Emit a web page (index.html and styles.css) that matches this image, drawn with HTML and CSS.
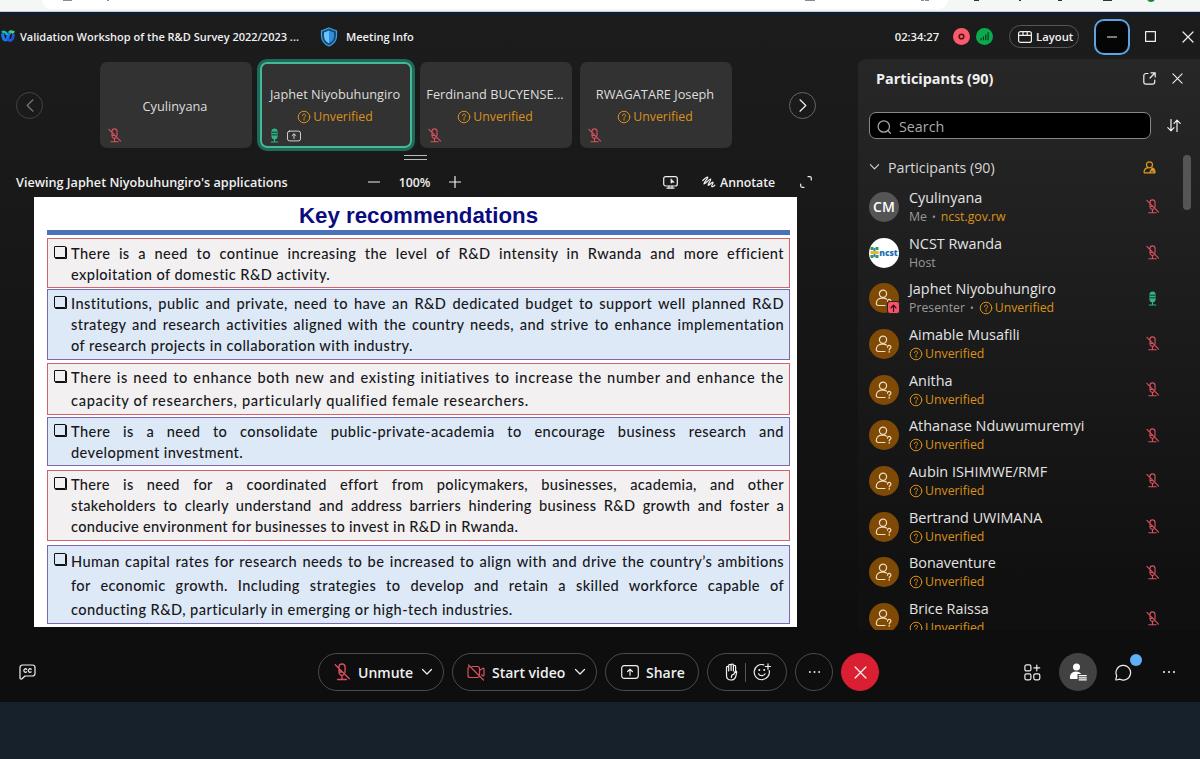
FILE: index.html
```html
<!DOCTYPE html>
<html lang="en">
<head>
    <meta charset="UTF-8">
    <meta name="viewport" content="width=device-width, initial-scale=1.0">
    <title>Validation Workshop of the R&amp;D Survey 2022/2023</title>
    <link rel="stylesheet" href="styles.css">
</head>
<body>
    <!-- Icon sprite -->
    <svg class="sprite" xmlns="http://www.w3.org/2000/svg">
        <symbol id="mic-off" viewBox="0 0 16 16">
            <path d="M5.300 4V3.600a2.700 2.700 0 0 1 5.400 0V8.500M5.300 6v2.300a2.700 2.700 0 0 0 4 2.300M5.300 8h3M8 11v3.500M4 14.700h8M2 1.500l12.500 12.500"/>
        </symbol>
        <symbol id="mic-on" viewBox="0 0 16 16">
            <rect x="5.300" y="1" width="5.400" height="10.500" rx="2.700" fill="currentColor"/>
            <path d="M8 11v3.500M4.500 14.900h7"/>
            <path class="gap" d="M5.500 4.500h5M5.500 7.300h5"/>
        </symbol>
        <symbol id="question" viewBox="0 0 14 14">
            <circle cx="7" cy="7" r="5.800"/>
            <path d="M5.400 5.600a1.600 1.600 0 1 1 2.400 1.400c-.6.300-.8.600-.8 1.100M7 9.300v.9"/>
        </symbol>
        <symbol id="share" viewBox="0 0 18 14">
            <rect x=".7" y=".7" width="16.600" height="12.600" rx="2.500"/>
            <path d="M9 10.200V4.500M6.600 6.500L9 4.200l2.400 2.300"/>
        </symbol>
        <symbol id="person" viewBox="0 0 18 18">
            <circle cx="8" cy="4.800" r="3.600"/>
            <path d="M10 16.500H3.300c-1.300 0-2-.8-2-2 0-2.900 2.300-5.200 5.200-5.400h2c1.100 0 2.100.4 2.900 1"/>
            <path d="M12.500 12.200a1.700 1.700 0 1 1 2.500 1.400c-.6.300-.8.600-.8 1.200M14.200 16.300v.9"/>
        </symbol>
        <symbol id="close" viewBox="0 0 12 12"><path d="M1 1l10 10M11 1L1 11"/></symbol>
        <symbol id="down" viewBox="0 0 12 8"><path d="M1.500 1.500L6 6l4.500-4.500"/></symbol>
        <symbol id="dots" viewBox="0 0 14 4">
            <g fill="currentColor" stroke="none"><circle cx="2" cy="2" r="1"/><circle cx="7" cy="2" r="1"/><circle cx="12" cy="2" r="1"/></g>
        </symbol>
    </svg>

    <!-- Browser strip behind the window -->
    <div class="browser">
        <div class="address"></div>
        <svg class="browser-marks" viewBox="0 0 1200 12">
            <path d="M63 0h9M108 0v1M805 0h10M921 0h3M925 0h4" stroke="#8b8b95"/>
            <path d="M974 0h5M1020 0v1M1058 0h4M1103 0h9" stroke="#333"/>
            <circle cx="1151" cy="-2" r="4" fill="#178a2c"/>
        </svg>
    </div>

    <div class="window">
        <!-- Title bar -->
        <header class="titlebar">
            <svg class="logo" viewBox="0 0 16 13">
                <path d="M2.600 3.500c.2 3.600 1.200 6.500 3 6.500 1.500 0 2-2 2.600-4.200C8.900 3.500 9.500 2 11 2" fill="none" stroke="#1779ef" stroke-width="3.200"/>
                <path d="M2 2.500c1.800-1.400 4.300-.3 5 2.500" fill="none" stroke="#15b7c5" stroke-width="2.600"/>
                <path d="M8 8.500c.5 1.500 1.300 2 2.200 2 2 0 3.100-3.600 3.200-6.500" fill="none" stroke="#2453df" stroke-width="3"/>
                <path d="M9.500 2.600c1-1.100 3-1.200 4.500.3" fill="none" stroke="#43d071" stroke-width="3"/>
            </svg>
            <span class="meeting-title">Validation Workshop of the R&amp;D Survey 2022/2023 ...</span>
            <svg class="shield" viewBox="0 0 18 20">
                <path d="M9 1l7.500 3v5c0 4.800-3 8-7.500 10C4.500 17 1.500 13.800 1.500 9V4z" fill="#17496f" stroke="#3f9fe0" stroke-width="1.200"/>
                <path d="M9 3.500l5 2V9c0 3.500-1.900 5.800-5 7.400z" fill="#2d8fe0"/>
                <path d="M9 3.500l-5 2V9c0 3.500 1.900 5.800 5 7.400z" fill="#6cc1ff"/>
            </svg>
            <span class="meeting-info">Meeting Info</span>
            <span class="clock">02:34:27</span>
            <svg class="status" viewBox="0 0 16 16"><circle cx="8" cy="8" r="8" fill="#fb5a6c"/><circle cx="8" cy="8" r="2.200" fill="none" stroke="#4e1119" stroke-width="1.400"/></svg>
            <svg class="status" viewBox="0 0 16 16"><circle cx="8" cy="8" r="8" fill="#0bab4d"/><path d="M4.800 11.500v-2M7 11.500V8M9.200 11.500V6M11.400 11.500V4" stroke="#07351a" stroke-width="1.100"/></svg>
            <button class="layout-button">
                <svg class="icon" width="14" height="12" viewBox="0 0 14 12"><rect x=".6" y=".6" width="12.800" height="10.800" rx="2"/><path d="M.6 4.300h12.800M5 .6v3.700M9.200 .6v3.700"/></svg>
                Layout
            </button>
            <button class="minimize"><svg class="icon" width="10" height="2" viewBox="0 0 10 2"><path d="M0 1h10"/></svg></button>
            <svg class="icon maximize" width="11" height="11" viewBox="0 0 11 11"><rect x=".6" y=".6" width="9.800" height="9.800"/></svg>
            <svg class="icon win-close" width="12" height="12"><use href="#close"/></svg>
        </header>

        <div class="main">
            <section class="stage">
                <!-- Video strip -->
                <div class="strip">
                    <button class="nav nav-prev"><svg class="icon" width="8" height="13" viewBox="0 0 8 13"><path d="M7 .8L1.200 6.500 7 12.200"/></svg></button>
                    <div class="tiles">
                        <div class="tile">
                            <span class="tile-name">Cyulinyana</span>
                            <div class="tile-icons"><svg class="icon red"><use href="#mic-off"/></svg></div>
                        </div>
                        <div class="tile active">
                            <span class="tile-name">Japhet Niyobuhungiro</span>
                            <span class="unverified"><svg class="icon"><use href="#question"/></svg>Unverified</span>
                            <div class="tile-icons"><svg class="icon green"><use href="#mic-on"/></svg><svg class="icon sharing"><use href="#share"/></svg></div>
                        </div>
                        <div class="tile">
                            <span class="tile-name">Ferdinand BUCYENSE...</span>
                            <span class="unverified"><svg class="icon"><use href="#question"/></svg>Unverified</span>
                            <div class="tile-icons"><svg class="icon red"><use href="#mic-off"/></svg></div>
                        </div>
                        <div class="tile">
                            <span class="tile-name">RWAGATARE Joseph</span>
                            <span class="unverified"><svg class="icon"><use href="#question"/></svg>Unverified</span>
                            <div class="tile-icons"><svg class="icon red"><use href="#mic-off"/></svg></div>
                        </div>
                    </div>
                    <button class="nav nav-next"><svg class="icon" width="8" height="13" viewBox="0 0 8 13"><path d="M1 .8l5.800 5.700L1 12.200"/></svg></button>
                </div>
                <div class="handle"></div>

                <!-- Viewer toolbar -->
                <div class="viewbar">
                    <span class="viewing">Viewing Japhet Niyobuhungiro's applications</span>
                    <svg class="icon" width="12" height="12" viewBox="0 0 12 12"><path d="M.5 6h11"/></svg>
                    <span class="zoom">100%</span>
                    <svg class="icon" width="12" height="12" viewBox="0 0 12 12"><path d="M.5 6h11M6 .5v11"/></svg>
                    <svg class="icon monitor" width="15" height="13" viewBox="0 0 15 13"><rect x=".7" y=".7" width="13.600" height="9.300" rx="2"/><path d="M4 12.200h7M6 10v2M9 10v2"/><path d="M8 3.200v4l1.200-1h1.600z" fill="currentColor" stroke-width=".8"/></svg>
                    <span class="annotate">
                        <svg class="icon" width="14" height="12" viewBox="0 0 14 12"><path d="M.8 4.500C3 2.300 5 .8 5.700 1.200c.8.500-4.500 6-3.800 6.700.7.700 5.800-5.500 6.800-4.800.8.600-3.400 5.600-2.500 6.200.8.500 4-3.700 4.800-3.100.8.500-1.900 3.500-1.200 4.300.5.600 2-.4 3-1.300"/></svg>
                        Annotate
                    </span>
                    <svg class="icon expand" width="12" height="12" viewBox="0 0 12 12"><path d="M8 .7h1.800c.9 0 1.500.6 1.500 1.500V4M4 11.300H2.200c-.9 0-1.500-.6-1.500-1.500V8"/></svg>
                </div>

                <!-- Shared slide -->
                <article class="slide">
                    <h1>Key recommendations</h1>
                    <div class="rule"></div>
                    <div class="rec rec-1 pink">
                        <i class="box"></i>
                        <p><span>There is a need to continue increasing the level of R&amp;D intensity in Rwanda and more efficient</span>
                        <span>exploitation of domestic R&amp;D activity.</span></p>
                    </div>
                    <div class="rec rec-2 blue">
                        <i class="box"></i>
                        <p><span>Institutions, public and private, need to have an R&amp;D dedicated budget to support well planned R&amp;D</span>
                        <span>strategy and research activities aligned with the country needs, and strive to enhance implementation</span>
                        <span>of research projects in collaboration with industry.</span></p>
                    </div>
                    <div class="rec rec-3 pink">
                        <i class="box"></i>
                        <p><span>There is need to enhance both new and existing initiatives to increase the number and enhance the</span>
                        <span>capacity of researchers, particularly qualified female researchers.</span></p>
                    </div>
                    <div class="rec rec-4 blue">
                        <i class="box"></i>
                        <p><span>There is a need to consolidate public-private-academia to encourage business research and</span>
                        <span>development investment.</span></p>
                    </div>
                    <div class="rec rec-5 pink">
                        <i class="box"></i>
                        <p><span>There is need for a coordinated effort from policymakers, businesses, academia, and other</span>
                        <span>stakeholders to clearly understand and address barriers hindering business R&amp;D growth and foster a</span>
                        <span>conducive environment for businesses to invest in R&amp;D in Rwanda.</span></p>
                    </div>
                    <div class="rec rec-6 blue">
                        <i class="box"></i>
                        <p><span>Human capital rates for research needs to be increased to align with and drive the country’s ambitions</span>
                        <span>for economic growth. Including strategies to develop and retain a skilled workforce capable of</span>
                        <span>conducting R&amp;D, particularly in emerging or high-tech industries.</span></p>
                    </div>
                </article>
            </section>

            <!-- Participants panel -->
            <aside class="panel">
                <div class="panel-head">
                    <h2>Participants (90)</h2>
                    <svg class="icon" width="13" height="13" viewBox="0 0 13 13"><path d="M5 1.500H3A2.200 2.200 0 0 0 .8 3.700V10A2.200 2.200 0 0 0 3 12.200h6.500a2.200 2.200 0 0 0 2.200-2.200V8M8 .8h4.200V5M12 1L7 6"/></svg>
                    <svg class="icon" width="11" height="11"><use href="#close"/></svg>
                </div>
                <div class="search-row">
                    <div class="search">
                        <svg class="icon" width="14" height="14" viewBox="0 0 14 14"><circle cx="6.800" cy="6.500" r="5.700"/><path d="M10.800 10.500l2.700 2.900"/></svg>
                        Search
                    </div>
                    <svg class="icon" width="14" height="13" viewBox="0 0 14 13"><path d="M4 .5v11.300M.8 8.600L4 11.800l3-3.200M10 12.500V1.200M7 4.400l3-3.200 3.200 3.200"/></svg>
                </div>
                <div class="group">
                    <svg class="icon" width="11" height="8"><use href="#down"/></svg>
                    <span>Participants (90)</span>
                    <svg class="icon amber" width="13" height="13" viewBox="0 0 13 13"><circle cx="6.500" cy="3.800" r="3"/><path d="M6 11.800H1.200c-.3-2.500 1-4.500 3.300-5M8.700 6.800c2.300.5 3.500 2.500 3.200 5H6.500L9 7.500l2.500 4.300M9 9.200v1"/></svg>
                </div>
                <ul class="list">
                    <li>
                        <div class="avatar initials">CM</div>
                        <div class="who"><b>Cyulinyana</b><small>Me <em>•</em> <a>ncst.gov.rw</a></small></div>
                        <svg class="icon red"><use href="#mic-off"/></svg>
                    </li>
                    <li>
                        <div class="avatar ncst"><svg width="9" height="11" viewBox="0 0 8 11"><path d="M0 0h3v3H0zM5 0h3v3H5zM0 8h3v3H0zM5 8h3v3H5z" fill="#2a9a63"/><path d="M3 1h2v9H3z" fill="#2a82c6"/><path d="M0 4h8v3H0z" fill="#e0b92b"/></svg><span>ncst</span></div>
                        <div class="who"><b>NCST Rwanda</b><small>Host</small></div>
                        <svg class="icon red"><use href="#mic-off"/></svg>
                    </li>
                    <li>
                        <div class="avatar"><svg class="icon"><use href="#person"/></svg><i class="badge"><svg class="icon" width="7" height="8" viewBox="0 0 7 8"><path d="M3.500 7.500v-6M1 3.800L3.500 1.200 6 3.800"/></svg></i></div>
                        <div class="who"><b>Japhet Niyobuhungiro</b><small>Presenter <em>•</em> <span class="unverified"><svg class="icon"><use href="#question"/></svg>Unverified</span></small></div>
                        <svg class="icon green"><use href="#mic-on"/></svg>
                    </li>
                    <li>
                        <div class="avatar"><svg class="icon"><use href="#person"/></svg></div>
                        <div class="who"><b>Aimable Musafili</b><small><span class="unverified"><svg class="icon"><use href="#question"/></svg>Unverified</span></small></div>
                        <svg class="icon red"><use href="#mic-off"/></svg>
                    </li>
                    <li>
                        <div class="avatar"><svg class="icon"><use href="#person"/></svg></div>
                        <div class="who"><b>Anitha</b><small><span class="unverified"><svg class="icon"><use href="#question"/></svg>Unverified</span></small></div>
                        <svg class="icon red"><use href="#mic-off"/></svg>
                    </li>
                    <li>
                        <div class="avatar"><svg class="icon"><use href="#person"/></svg></div>
                        <div class="who"><b>Athanase Nduwumuremyi</b><small><span class="unverified"><svg class="icon"><use href="#question"/></svg>Unverified</span></small></div>
                        <svg class="icon red"><use href="#mic-off"/></svg>
                    </li>
                    <li>
                        <div class="avatar"><svg class="icon"><use href="#person"/></svg></div>
                        <div class="who"><b>Aubin ISHIMWE/RMF</b><small><span class="unverified"><svg class="icon"><use href="#question"/></svg>Unverified</span></small></div>
                        <svg class="icon red"><use href="#mic-off"/></svg>
                    </li>
                    <li>
                        <div class="avatar"><svg class="icon"><use href="#person"/></svg></div>
                        <div class="who"><b>Bertrand UWIMANA</b><small><span class="unverified"><svg class="icon"><use href="#question"/></svg>Unverified</span></small></div>
                        <svg class="icon red"><use href="#mic-off"/></svg>
                    </li>
                    <li>
                        <div class="avatar"><svg class="icon"><use href="#person"/></svg></div>
                        <div class="who"><b>Bonaventure</b><small><span class="unverified"><svg class="icon"><use href="#question"/></svg>Unverified</span></small></div>
                        <svg class="icon red"><use href="#mic-off"/></svg>
                    </li>
                    <li>
                        <div class="avatar"><svg class="icon"><use href="#person"/></svg></div>
                        <div class="who"><b>Brice Raissa</b><small><span class="unverified"><svg class="icon"><use href="#question"/></svg>Unverified</span></small></div>
                        <svg class="icon red"><use href="#mic-off"/></svg>
                    </li>
                </ul>
                <div class="scrollbar"></div>
            </aside>
        </div>

        <!-- Call controls -->
        <footer class="controls">
            <svg class="icon captions" width="17" height="16" viewBox="0 0 17 16"><path d="M3.500 1h10A2.500 2.500 0 0 1 16 3.500v6a2.500 2.500 0 0 1-2.500 2.500H6l-3 2.800c-.8.600-2 .2-2-.8V3.500A2.500 2.500 0 0 1 3.500 1z"/><path d="M7.700 5.300a1.700 1.700 0 1 0 0 2.500M12.200 5.300a1.700 1.700 0 1 0 0 2.500"/></svg>
            <div class="center">
                <button class="pill unmute"><svg class="icon red" width="18" height="18"><use href="#mic-off"/></svg><span>Unmute</span><svg class="icon" width="12" height="8"><use href="#down"/></svg></button>
                <button class="pill video"><svg class="icon red" width="18" height="17" viewBox="0 0 18 17"><path d="M5 2.500h5.500A2 2 0 0 1 12.500 4.500v6M3 2.500A2 2 0 0 0 1 4.500v7a2 2 0 0 0 2 2h7.500a2 2 0 0 0 1.600-.8M12.500 6.500l3.500-2.200c.6-.3 1 0 1 .6v6.200c0 .6-.4.900-1 .6l-1.500-.9M1.500 1l15 15"/></svg><span>Start video</span><svg class="icon" width="12" height="8"><use href="#down"/></svg></button>
                <button class="pill share"><svg class="icon" width="18" height="14"><use href="#share"/></svg><span>Share</span></button>
                <button class="pill react">
                    <svg class="icon" width="13" height="18" viewBox="0 0 13 18"><path d="M1.500 9V4.500a1.100 1.100 0 0 1 2.200 0V8M3.700 8V2.500a1.200 1.200 0 0 1 2.400 0V7.500M6.100 7.500V1.900a1.200 1.200 0 0 1 2.300 0V8M8.400 8V3.500a1.100 1.100 0 0 1 2.200 0V9.500M1.500 8.500v4c0 2.800 2 4.500 4.600 4.500 2.500 0 4.200-1.500 4.800-4l.8-3.800c.1-1.300-1.300-1.400-1.800-.4l-1 2.400c-1.700.3-2.600 1.500-2.500 3.300"/></svg>
                    <i class="divider"></i>
                    <svg class="icon" width="18" height="18" viewBox="0 0 18 18"><path d="M10.800 1.800A7.600 7.600 0 1 0 16.200 7.500M15 .8v5.400M12.300 3.500h5.400M5.500 10.800c1.300 2.500 5.200 2.500 6.600 0"/><circle cx="6.300" cy="7" r="1" fill="currentColor" stroke="none"/><circle cx="11.200" cy="7" r="1" fill="currentColor" stroke="none"/></svg>
                </button>
                <button class="round"><svg class="icon" width="13" height="4"><use href="#dots"/></svg></button>
                <button class="round leave"><svg class="icon" width="13" height="13"><use href="#close"/></svg></button>
            </div>
            <div class="right">
                <svg class="icon" width="17" height="17" viewBox="0 0 17 17"><rect x=".9" y=".9" width="6" height="6" rx="1.500"/><rect x=".9" y="9.800" width="6" height="6" rx="1.500"/><rect x="9.800" y="9.800" width="6" height="6" rx="1.500"/><path d="M12.800 1v5.800M9.900 3.900h5.800"/></svg>
                <button class="people"><svg width="18" height="18" viewBox="0 0 18 18" fill="#fff"><circle cx="7.500" cy="4" r="3.500"/><path d="M1 15.500c-.5-4 2-7 6-7 2.500 0 4.200 1 5.200 2.500H8.500V16H1.500z"/><path d="M9.700 12h8v1.200h-8zM9.700 14.200h8v1.200h-8zM9.700 16.300h8v1.200h-8z"/></svg></button>
                <div class="chat"><svg class="icon" width="17" height="17" viewBox="0 0 17 17"><path d="M1.700 11.800A7.300 7.300 0 1 1 5 15.200l-3.600.8c-.5 0-.7-.3-.6-.7z"/></svg><i></i></div>
                <svg class="icon" width="14" height="4"><use href="#dots"/></svg>
            </div>
        </footer>
    </div>
</body>
</html>
```
FILE: styles.css
```css
* {
    margin: 0;
    padding: 0;
    box-sizing: border-box;
}

body {
    width: 1200px;
    height: 759px;
    overflow: hidden;
    background-color: #17212b;
    font-family: "Open Sans", "Noto Sans", sans-serif;
    color: #f0f0f0;
}

button {
    background: none;
    border: none;
    color: inherit;
    font: inherit;
}

.sprite {
    display: none;
}

.icon {
    display: block;
    flex: none;
    fill: none;
    stroke: currentColor;
    stroke-width: 1.2;
    stroke-linecap: round;
    stroke-linejoin: round;
}

.red {
    color: #d9505f;
}

.green {
    color: #2bb688;
}

.amber {
    color: #e09a1c;
}

/* Browser strip */
.browser {
    position: relative;
    height: 12px;
    background-color: #f5f6f6;
    border-bottom: 1px solid #c3cbd2;
    overflow: hidden;
}

.address {
    width: 906px;
    height: 9px;
    margin-left: 42px;
    background-color: #fff;
    border-radius: 0 0 12px 12px;
}

.browser-marks {
    position: absolute;
    top: 0;
    left: 0;
    width: 1200px;
    height: 12px;
    stroke-width: 2;
}

/* Window */
.window {
    display: flex;
    flex-direction: column;
    height: 690px;
    border-top: 4px solid #141c29;
    background: linear-gradient(#1c1c1c, #191919 25%, #0e0e0e 88%);
}

.titlebar {
    display: flex;
    align-items: center;
    height: 43px;
    padding-bottom: 2px;
    flex: none;
    font-size: 11.3px;
    font-weight: 600;
}

.logo {
    width: 16px;
    height: 13px;
    margin-right: 4px;
}

.meeting-title {
    width: 300px;
    font-size: 11px;
    white-space: nowrap;
}

.shield {
    width: 18px;
    height: 20px;
    margin-right: 8px;
}

.meeting-info {
    flex: 1;
    font-size: 11.1px;
}

.clock {
    margin-right: 14px;
    letter-spacing: -0.1px;
}

.status {
    width: 17px;
    height: 17px;
    margin-right: 6px;
}

.layout-button {
    display: flex;
    align-items: center;
    gap: 4px;
    width: 70px;
    height: 23px;
    margin-left: 10px;
    padding-left: 8px;
    border: 1px solid #565656;
    border-radius: 12px;
}

.minimize {
    display: flex;
    align-items: center;
    justify-content: center;
    width: 36px;
    height: 36px;
    margin-left: 15px;
    background-color: #050505;
    border: 2px solid #5ca4e6;
    border-radius: 10px;
}

.maximize {
    margin-left: 15px;
}

.win-close {
    margin: 0 6px 0 26px;
}

.main {
    display: flex;
    height: 571px;
}

.stage {
    width: 858px;
}

/* Video strip */
.strip {
    display: flex;
    align-items: center;
    height: 92px;
    padding: 0 42px 0 16px;
}

.nav {
    display: flex;
    align-items: center;
    justify-content: center;
    width: 27px;
    height: 27px;
    border: 1px solid #666;
    border-radius: 50%;
}

.nav-prev {
    color: #777;
    border-color: #444;
}

.tiles {
    display: flex;
    flex: 1;
    gap: 8px;
    margin-left: 57px;
}

.tile {
    position: relative;
    display: flex;
    flex-direction: column;
    align-items: center;
    justify-content: center;
    gap: 5px;
    width: 152px;
    height: 86px;
    padding: 1px 2px 0 0;
    background-color: #323232;
    border-radius: 7px;
    color: #dedede;
}

.tile.active {
    box-shadow: inset 0 0 0 2px #46b898, 0 0 0 3px #1d6a5d;
}

.tile-name {
    font-size: 12.75px;
    line-height: 18px;
    white-space: nowrap;
}

.tile-icons {
    position: absolute;
    left: 7px;
    bottom: 5px;
    display: flex;
    align-items: center;
    gap: 5px;
}

.tile-icons .icon {
    width: 15px;
    height: 15px;
}

.tile-icons .sharing {
    width: 14px;
    height: 12px;
}

.unverified {
    display: inline-flex;
    align-items: center;
    gap: 2px;
    color: #db9016;
    font-size: 12.3px;
    line-height: 18px;
}

.unverified .icon {
    width: 14px;
    height: 14px;
    stroke-width: 1;
}

.gap {
    stroke: #222;
    stroke-width: 1;
}

.handle {
    width: 23px;
    height: 5px;
    margin: 4px 0 0 404px;
    border: solid #bbb;
    border-width: 1px 0;
}

/* Viewer toolbar */
.viewbar {
    display: flex;
    align-items: center;
    height: 37px;
    padding: 7px 46px 0 16px;
    font-size: 12.3px;
    font-weight: 600;
}

.viewing {
    width: 352px;
    font-size: 12.65px;
    white-space: nowrap;
}

.zoom {
    width: 69px;
    text-align: center;
}

.monitor {
    margin-left: 202px;
}

.annotate {
    display: flex;
    align-items: center;
    gap: 4px;
    margin-left: 24px;
    flex: 1;
}

/* Shared slide */
.slide {
    width: 763px;
    height: 430px;
    margin-left: 34px;
    padding: 6px 7px 0 13px;
    background-color: #fff;
    color: #17181c;
}

.slide h1 {
    color: #0b0b80;
    font-family: "Liberation Sans", Arial, sans-serif;
    font-size: 22.3px;
    line-height: 25px;
    text-align: center;
}

.rule {
    height: 5px;
    margin-top: 2px;
    background-color: #4b72bd;
}

.rec {
    display: flex;
    padding: 0 5px 0 6px;
    border: 1px solid;
    font-family: Lato, sans-serif;
    font-size: 14.6px;
    font-weight: 500;
    letter-spacing: 0.42px;
    line-height: 21px;
}

.rec p {
    flex: 1;
    min-width: 0;
}

.rec span {
    display: block;
    white-space: nowrap;
    text-align-last: justify;
}

.rec span:last-child {
    text-align-last: left;
}

.pink {
    background-color: #f3f0f1;
    border-color: #d3626b;
}

.blue {
    background-color: #dee9f7;
    border-color: #7d66b0;
}

.box {
    flex: none;
    width: 12px;
    height: 12px;
    margin: 3px 5px 0 0;
    border: 1px solid #111;
    border-radius: 1px;
    box-shadow: 1px 1px 0 #111;
}

.rec-1 {
    height: 50px;
    margin-top: 3px;
    padding-top: 4px;
}

.rec-2 {
    height: 71px;
    margin-top: 1px;
    padding-top: 3px;
}

.rec-3 {
    height: 52px;
    margin-top: 3px;
    padding-top: 3px;
    letter-spacing: 0.68px;
    line-height: 22.5px;
}

.rec-4 {
    height: 49px;
    margin-top: 2px;
    padding-top: 3px;
}

.rec-5 {
    height: 71px;
    margin-top: 4px;
    padding-top: 3px;
    letter-spacing: 0.3px;
}

.rec-6 {
    height: 79px;
    margin-top: 4px;
    padding-top: 4px;
    line-height: 24px;
}

/* Participants panel */
.panel {
    position: relative;
    width: 342px;
    background: linear-gradient(#272727, #222 20%, #101010 92%);
    border-top-left-radius: 8px;
}

.panel-head {
    display: flex;
    align-items: center;
    gap: 16px;
    height: 38px;
    padding: 0 17px 0 18px;
}

.panel-head h2 {
    flex: 1;
    font-size: 14.4px;
}

.search-row {
    display: flex;
    align-items: center;
    gap: 16px;
    height: 27px;
    margin: 15px 0 0 11px;
}

.search {
    display: flex;
    align-items: center;
    gap: 8px;
    width: 282px;
    height: 27px;
    padding: 2px 0 0 7px;
    background-color: #000;
    border: 1px solid #888;
    border-radius: 7px;
    color: #aaa;
    font-size: 14.3px;
}

.group {
    display: flex;
    align-items: center;
    height: 45px;
    padding: 11px 44px 0 11px;
    font-size: 14.2px;
    color: #d8d8d8;
}

.group span {
    flex: 1;
    margin-left: 8px;
}

.list {
    height: 446px;
    overflow: hidden;
    list-style: none;
}

.list li {
    display: flex;
    align-items: center;
    height: 45.7px;
    padding: 0 40px 0 11px;
}

.list li > .icon {
    width: 15px;
    height: 15px;
}

.avatar {
    position: relative;
    display: flex;
    align-items: center;
    justify-content: center;
    width: 30px;
    height: 30px;
    margin-right: 10px;
    background-color: #7f4a05;
    border-radius: 50%;
    color: #f2dfc4;
}

.avatar > .icon {
    width: 18px;
    height: 18px;
}

.initials {
    background-color: #555;
    color: #fff;
    font-size: 14px;
    font-weight: 600;
}

.ncst {
    background-color: #fff;
    color: #1e6fb4;
    font-size: 8.5px;
    font-weight: 800;
    overflow: hidden;
}

.badge {
    position: absolute;
    right: -1px;
    bottom: -1px;
    display: flex;
    align-items: center;
    justify-content: center;
    width: 13px;
    height: 13px;
    background-color: #f45368;
    border: 1px solid #222;
    border-radius: 3px;
    color: #330a10;
}

.who {
    flex: 1;
}

.who b {
    display: block;
    color: #e4e4e4;
    font-size: 14.4px;
    font-weight: 400;
    line-height: 20px;
}

.who small {
    display: flex;
    align-items: center;
    gap: 5px;
    color: #999;
    font-size: 12.3px;
    line-height: 18px;
}

.who em {
    font-size: 10px;
    font-style: normal;
}

.who a {
    color: #db9016;
}

.scrollbar {
    position: absolute;
    top: 96px;
    right: 9px;
    width: 8px;
    height: 55px;
    background-color: #555;
    border-radius: 4px;
}

/* Call controls */
.controls {
    display: flex;
    align-items: center;
    flex: 1;
    padding: 12px 24px 0 19px;
    font-size: 14px;
    font-weight: 600;
}

.center {
    display: flex;
    gap: 8px;
    margin-left: 282px;
    flex: 1;
}

.pill {
    display: flex;
    align-items: center;
    height: 38px;
    border: 1px solid #4b4b4b;
    border-radius: 19px;
}

.pill span {
    flex: 1;
    margin-left: 7px;
    text-align: left;
    white-space: nowrap;
}

.unmute {
    width: 126px;
    padding: 0 10px 0 14px;
}

.video {
    width: 145px;
    padding: 0 10px 0 14px;
}

.share {
    width: 94px;
    padding: 0 12px 0 15px;
}

.react {
    gap: 7px;
    width: 80px;
    padding-left: 17px;
}

.divider {
    width: 1px;
    height: 19px;
    background-color: #555;
}

.round {
    display: flex;
    align-items: center;
    justify-content: center;
    width: 38px;
    height: 38px;
    border: 1px solid #4b4b4b;
    border-radius: 50%;
}

.leave {
    background-color: #db1f32;
    border-color: #db1f32;
}

.right {
    display: flex;
    align-items: center;
}

.people {
    display: flex;
    align-items: center;
    justify-content: center;
    width: 38px;
    height: 38px;
    margin: 0 18px;
    background-color: #424242;
    border-radius: 50%;
}

.chat {
    position: relative;
    margin-right: 30px;
}

.chat i {
    position: absolute;
    top: -10px;
    right: -10px;
    width: 12px;
    height: 12px;
    background-color: #5eb0fb;
    border-radius: 50%;
}
```
